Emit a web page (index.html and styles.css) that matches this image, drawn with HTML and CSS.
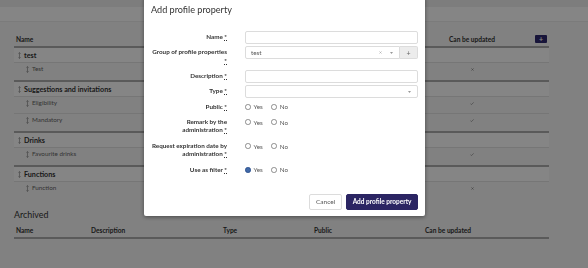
FILE: index.html
```html
<!DOCTYPE html>
<html lang="en">
<head>
<meta charset="utf-8">
<title>Profile properties</title>
<link rel="stylesheet" href="styles.css">
</head>
<body>
<div class="page">
  <div class="topbar"></div>
  <main class="content">
    <div class="ptable">
      <div class="trow thead">
        <div class="cell">Name</div>
        <div class="cell">Description</div>
        <div class="cell">Type</div>
        <div class="cell">Public</div>
        <div class="cell upd">Can be updated</div>
        <div class="cell act"><button class="mini-add">+</button></div>
      </div>

      <div class="tgroup">
        <div class="trow grow"><div class="cell span"><svg class="handle" viewBox="0 0 3 7" width="3" height="7"><path d="M1.5 .6V6.4M.4 1.7L1.5 .6L2.6 1.7M.4 5.3L1.5 6.4L2.6 5.3"/></svg>test</div></div>
        <div class="trow srow"><div class="cell name"><svg class="handle" viewBox="0 0 3 7" width="3" height="7"><path d="M1.5 .6V6.4M.4 1.7L1.5 .6L2.6 1.7M.4 5.3L1.5 6.4L2.6 5.3"/></svg>Test</div><div class="cell"></div><div class="cell"></div><div class="cell"></div><div class="cell upd"><svg class="mark" viewBox="0 0 3 3" width="3" height="3"><path d="M.4 .4L2.6 2.6M2.6 .4L.4 2.6"/></svg></div><div class="cell"></div></div>
      </div>

      <div class="tgroup">
        <div class="trow grow"><div class="cell span"><svg class="handle" viewBox="0 0 3 7" width="3" height="7"><path d="M1.5 .6V6.4M.4 1.7L1.5 .6L2.6 1.7M.4 5.3L1.5 6.4L2.6 5.3"/></svg>Suggestions and invitations</div></div>
        <div class="trow srow"><div class="cell name"><svg class="handle" viewBox="0 0 3 7" width="3" height="7"><path d="M1.5 .6V6.4M.4 1.7L1.5 .6L2.6 1.7M.4 5.3L1.5 6.4L2.6 5.3"/></svg>Eligibility</div><div class="cell"></div><div class="cell"></div><div class="cell"></div><div class="cell upd"><svg class="mark" viewBox="0 0 4 3" width="4" height="3"><path d="M.3 1.5L1.4 2.6L3.7 .4"/></svg></div><div class="cell"></div></div>
        <div class="trow srow"><div class="cell name"><svg class="handle" viewBox="0 0 3 7" width="3" height="7"><path d="M1.5 .6V6.4M.4 1.7L1.5 .6L2.6 1.7M.4 5.3L1.5 6.4L2.6 5.3"/></svg>Mandatory</div><div class="cell"></div><div class="cell"></div><div class="cell"></div><div class="cell upd"><svg class="mark" viewBox="0 0 4 3" width="4" height="3"><path d="M.3 1.5L1.4 2.6L3.7 .4"/></svg></div><div class="cell"></div></div>
      </div>

      <div class="tgroup">
        <div class="trow grow"><div class="cell span"><svg class="handle" viewBox="0 0 3 7" width="3" height="7"><path d="M1.5 .6V6.4M.4 1.7L1.5 .6L2.6 1.7M.4 5.3L1.5 6.4L2.6 5.3"/></svg>Drinks</div></div>
        <div class="trow srow"><div class="cell name"><svg class="handle" viewBox="0 0 3 7" width="3" height="7"><path d="M1.5 .6V6.4M.4 1.7L1.5 .6L2.6 1.7M.4 5.3L1.5 6.4L2.6 5.3"/></svg>Favourite drinks</div><div class="cell"></div><div class="cell"></div><div class="cell"></div><div class="cell upd"><svg class="mark" viewBox="0 0 4 3" width="4" height="3"><path d="M.3 1.5L1.4 2.6L3.7 .4"/></svg></div><div class="cell"></div></div>
      </div>

      <div class="tgroup last">
        <div class="trow grow"><div class="cell span"><svg class="handle" viewBox="0 0 3 7" width="3" height="7"><path d="M1.5 .6V6.4M.4 1.7L1.5 .6L2.6 1.7M.4 5.3L1.5 6.4L2.6 5.3"/></svg>Functions</div></div>
        <div class="trow srow"><div class="cell name"><svg class="handle" viewBox="0 0 3 7" width="3" height="7"><path d="M1.5 .6V6.4M.4 1.7L1.5 .6L2.6 1.7M.4 5.3L1.5 6.4L2.6 5.3"/></svg>Function</div><div class="cell"></div><div class="cell"></div><div class="cell"></div><div class="cell upd"><svg class="mark" viewBox="0 0 3 3" width="3" height="3"><path d="M.4 .4L2.6 2.6M2.6 .4L.4 2.6"/></svg></div><div class="cell"></div></div>
      </div>
    </div>

    <h2 class="archived">Archived</h2>
    <div class="arow">
      <div class="cell">Name</div>
      <div class="cell">Description</div>
      <div class="cell">Type</div>
      <div class="cell">Public</div>
      <div class="cell">Can be updated</div>
    </div>
  </main>
</div>

<div class="overlay"></div>

<div class="modal">
  <h1 class="modal-title">Add profile property</h1>
  <form class="form">
    <div class="frow">
      <label class="flabel">Name <abbr title="required">*</abbr></label>
      <div class="input"></div>
    </div>
    <div class="frow">
      <label class="flabel">Group of profile properties <abbr title="required">*</abbr></label>
      <div class="input-group">
        <div class="input select">
          <span class="value">test</span>
          <svg class="clear" viewBox="0 0 3 3" width="3" height="3"><path d="M.4 .4L2.6 2.6M2.6 .4L.4 2.6"/></svg>
          <svg class="caret" viewBox="0 0 3 2" width="3" height="2"><path d="M0 0H3L1.5 2Z"/></svg>
        </div>
        <div class="addon">+</div>
      </div>
    </div>
    <div class="frow">
      <label class="flabel">Description <abbr title="required">*</abbr></label>
      <div class="input"></div>
    </div>
    <div class="frow">
      <label class="flabel">Type <abbr title="required">*</abbr></label>
      <div class="input select">
        <span class="value"></span>
        <svg class="caret" viewBox="0 0 3 2" width="3" height="2"><path d="M0 0H3L1.5 2Z"/></svg>
      </div>
    </div>
    <div class="frow">
      <label class="flabel">Public <abbr title="required">*</abbr></label>
      <div class="radios"><span class="radio"></span><span class="rtext">Yes</span><span class="radio"></span><span class="rtext">No</span></div>
    </div>
    <div class="frow">
      <label class="flabel">Remark by the administration <abbr title="required">*</abbr></label>
      <div class="radios"><span class="radio"></span><span class="rtext">Yes</span><span class="radio"></span><span class="rtext">No</span></div>
    </div>
    <div class="frow">
      <label class="flabel">Request expiration date by administration <abbr title="required">*</abbr></label>
      <div class="radios"><span class="radio"></span><span class="rtext">Yes</span><span class="radio"></span><span class="rtext">No</span></div>
    </div>
    <div class="frow">
      <label class="flabel">Use as filter <abbr title="required">*</abbr></label>
      <div class="radios"><span class="radio checked"></span><span class="rtext">Yes</span><span class="radio"></span><span class="rtext">No</span></div>
    </div>
    <div class="footer">
      <button type="button" class="btn btn-cancel">Cancel</button>
      <button type="button" class="btn btn-primary">Add profile property</button>
    </div>
  </form>
</div>
</body>
</html>
```

FILE: styles.css
```css
* { box-sizing: border-box; }

html, body {
  margin: 0;
  padding: 0;
}

body {
  width: 588px;
  height: 268px;
  overflow: hidden;
  background: #f7f7f7;
  color: #333;
  font-family: Lato, "Open Sans", sans-serif;
}

.topbar {
  height: 22px;
  background: #fff;
  border-top: 7px solid #f0f0f0;
  border-bottom: 1px solid #ececec;
}

.content {
  padding: 10px 39px 0 14px;
}

.trow {
  display: grid;
  grid-template-columns: 130px 110px 90px 97px 62px 46px;
}

.cell {
  padding-left: 2px;
  white-space: nowrap;
}

.thead {
  height: 16px;
  align-items: center;
  font-size: 6.6px;
  font-weight: 700;
  color: #333;
  border-bottom: 2px solid #adadad;
}

.thead .cell { line-height: 9px; }

.upd {
  text-align: center;
  padding-left: 0;
}

.act {
  display: flex;
  justify-content: flex-end;
  padding-right: 2px;
}

.mini-add {
  width: 12px;
  height: 8px;
  padding: 0;
  border: 0;
  border-radius: 1px;
  background: #2f2a70;
  color: #fff;
  font-family: Lato, sans-serif;
  font-size: 7px;
  font-weight: 700;
  line-height: 8px;
}

.tgroup {
  border-bottom: 2px solid #adadad;
}

.tgroup.last { border-bottom: 0; }

.grow {
  display: flex;
  height: 15px;
  align-items: center;
  background: #fff;
  border-bottom: 1px solid #e3e3e3;
  font-size: 7.2px;
  font-weight: 700;
  color: #333;
}

.grow .span {
  display: flex;
  align-items: center;
  padding-left: 4px;
  line-height: 9px;
}

.srow {
  height: 17px;
  align-items: start;
  font-size: 6.3px;
  color: #666;
  border-bottom: 1px solid #e3e3e3;
}

.srow:last-child { border-bottom: 0; }

.srow .cell {
  padding-top: 2px;
  line-height: 8.6px;
}

.srow .name {
  display: flex;
  align-items: center;
  padding-left: 12px;
}

.handle {
  margin-right: 3px;
  flex: none;
}

.handle path {
  stroke: #777;
  stroke-width: .6;
  fill: none;
}

.mark path {
  stroke: #777;
  stroke-width: .6;
  fill: none;
}

.archived {
  margin: 9.5px 0 3.5px;
  font-size: 8.9px;
  line-height: 11px;
  font-weight: 400;
  color: #333;
}

.arow {
  display: grid;
  grid-template-columns: 75px 132px 91px 111px 1fr;
  height: 16px;
  align-items: center;
  font-size: 6.6px;
  font-weight: 700;
  line-height: 9px;
  border-bottom: 2px solid #adadad;
}

.overlay {
  position: fixed;
  inset: 0;
  background: rgba(0, 0, 0, .48);
}

.modal {
  position: fixed;
  left: 144px;
  top: -4px;
  width: 281px;
  padding: 0 7px 6.5px;
  background: #fff;
  border-radius: 2px;
  box-shadow: 0 1px 4px rgba(0, 0, 0, .45);
}

.modal-title {
  margin: 8px 0 0;
  font-size: 9.1px;
  line-height: 12px;
  font-weight: 400;
  color: #333;
}

.form {
  margin-top: 15px;
  display: flex;
  flex-direction: column;
  gap: 2.2px;
}

.frow {
  display: grid;
  grid-template-columns: 76px 173px;
  column-gap: 18px;
  align-items: start;
}

.flabel {
  padding: 2.15px 0;
  text-align: right;
  font-size: 6.3px;
  line-height: 8.7px;
  font-weight: 700;
  color: #333;
}

abbr {
  text-decoration: underline dotted;
  text-underline-offset: 1px;
  border: 0;
}

.input {
  height: 13px;
  border: 1px solid #dcdcdc;
  border-radius: 2px;
  background: #fff;
}

.select {
  display: flex;
  align-items: center;
  padding: 0 6px 0 5px;
  font-size: 6.3px;
  color: #555;
}

.select .value { flex: 1; }

.clear {
  margin-right: 8px;
}

.clear path {
  stroke: #999;
  stroke-width: .5;
}

.caret path { fill: #999; }

.input-group {
  display: flex;
  height: 13px;
}

.input-group .select {
  flex: 1;
  border-radius: 2px 0 0 2px;
}

.addon {
  width: 18px;
  height: 13px;
  display: flex;
  align-items: center;
  justify-content: center;
  background: #ececec;
  border: 1px solid #dcdcdc;
  border-left: 0;
  border-radius: 0 2px 2px 0;
  font-size: 7px;
  color: #666;
}

.radios {
  display: flex;
  align-items: center;
  height: 13px;
  font-size: 6.3px;
  color: #555;
}

.radio {
  width: 5.5px;
  height: 5.5px;
  border: .6px solid #8c8c8c;
  border-radius: 50%;
  background: #fff;
  margin-right: 3px;
}

.radio.checked {
  background: #4169a8;
  border-color: #2e5290;
}

.rtext { margin-right: 8.5px; }

.footer {
  display: flex;
  justify-content: flex-end;
  gap: 4.5px;
  margin-top: 15px;
}

.btn {
  height: 16px;
  padding: 0 5.5px;
  border-radius: 2px;
  font-family: Lato, sans-serif;
  font-size: 6.5px;
  line-height: 14px;
  cursor: pointer;
}

.btn-cancel {
  background: #fff;
  border: 1px solid #dcdcdc;
  color: #555;
}

.btn-primary {
  background: #2b2563;
  border: 1px solid #2b2563;
  color: #fff;
  font-weight: 700;
}
```
